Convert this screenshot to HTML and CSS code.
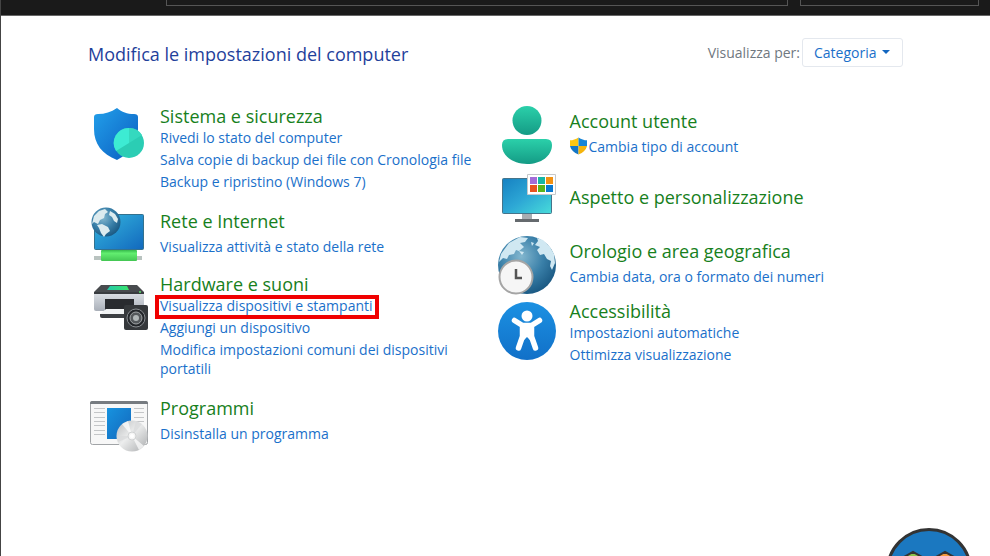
FILE: index.html
```html
<!DOCTYPE html>
<html lang="it">
<head>
    <meta charset="utf-8">
    <title>Pannello di controllo</title>
    <link rel="stylesheet" href="styles.css">
</head>
<body>
    <div class="topbar">
        <div class="address-box"></div>
        <div class="search-box"></div>
    </div>
    <main class="panel">
        <div class="panel-header">
            <h1>Modifica le impostazioni del computer</h1>
            <div class="view-by">
                <label for="view">Visualizza per:</label>
                <div class="select-wrap">
                    <select id="view">
                        <option>Categoria</option>
                    </select>
                </div>
            </div>
        </div>
        <div class="columns">
            <div class="column column-left">
                <section class="item">
                    <svg class="icon" viewBox="0 0 60 48" aria-hidden="true">
                        <defs>
                            <linearGradient id="shield" x1="0" y1="0" x2="1" y2="1"><stop offset="0" stop-color="#22a0ea"/><stop offset="1" stop-color="#0b5cc0"/></linearGradient>
                        </defs>
                        <path d="M29 4c5 4 10 6 17 6q4 0 4 3v12c0 14-8 24-21 31C14 50 6 40 6 25V13q0-3 4-3c7 0 13-2 19-6z" fill="url(#shield)"/>
                        <circle cx="41" cy="39" r="15" fill="#2bcdb4"/>
                        <path d="M41 39V24A15 15 0 0 0 28 47z" fill="#3debd3"/>
                        <path d="M41 39l13-8a15 15 0 0 0-13-7z" fill="#35d9bf"/>
                    </svg>
                    <div>
                        <h2><a href="#">Sistema e sicurezza</a></h2>
                        <ul>
                            <li><a href="#">Rivedi lo stato del computer</a></li>
                            <li><a href="#">Salva copie di backup dei file con Cronologia file</a></li>
                            <li><a href="#">Backup e ripristino (Windows 7)</a></li>
                        </ul>
                    </div>
                </section>
                <section class="item">
                    <svg class="icon" viewBox="0 0 60 48" aria-hidden="true">
                        <defs>
                            <linearGradient id="screen" x1="0" y1="0" x2="1" y2="1"><stop offset="0" stop-color="#35b8df"/><stop offset="1" stop-color="#1268bd"/></linearGradient>
                            <radialGradient id="globe" cx=".4" cy=".35" r=".7"><stop offset="0" stop-color="#83b7cf"/><stop offset=".55" stop-color="#397fa8"/><stop offset="1" stop-color="#185680"/></radialGradient>
                            <linearGradient id="cable" x1="0" y1="0" x2="0" y2="1"><stop offset="0" stop-color="#36ba4c"/><stop offset=".3" stop-color="#62ee70"/><stop offset="1" stop-color="#43c653"/></linearGradient>
                        </defs>
                        <rect x="6.500" y="5.500" width="49" height="35" rx="1" fill="url(#screen)" stroke="#33718e"/>
                        <path d="M6 47h48v4H6z" fill="#b9c3c0"/>
                        <rect x="13" y="41" width="36" height="11" rx="1" fill="url(#cable)"/>
                        <circle cx="18" cy="13" r="14.500" fill="url(#globe)"/>
                        <path d="M6 7l5-5 6-2 3 3-3 2-1 4-4 2-2 4-4-2-2 2zM9 16l5-1 6 3 2 4-4 3-2 3-3-4-2-5zM22 2l5 3 3 5-1 4-3-2-2-4-3-2z" fill="#dcebef"/>
                    </svg>
                    <div>
                        <h2><a href="#">Rete e Internet</a></h2>
                        <ul class="single">
                            <li><a href="#">Visualizza attività e stato della rete</a></li>
                        </ul>
                    </div>
                </section>
                <section class="item">
                    <svg class="icon" viewBox="0 0 60 48" aria-hidden="true">
                        <defs>
                            <linearGradient id="body" x1="0" y1="0" x2="0" y2="1"><stop offset="0" stop-color="#dce0e5"/><stop offset="1" stop-color="#a9afb8"/></linearGradient>
                            <linearGradient id="light" x1="0" y1="0" x2="1" y2="0"><stop offset="0" stop-color="#25c8aa"/><stop offset="1" stop-color="#39e56c"/></linearGradient>
                        </defs>
                        <path d="M13 13h36l7 7v2H6v-2z" fill="#484b4e"/>
                        <path d="M22 14h17l2 4H19z" fill="url(#light)"/>
                        <path d="M6 21h50v16q0 2-2 2H8q-2 0-2-2z" fill="url(#body)"/>
                        <path d="M6 20h50v2H6z" fill="#393c40"/>
                        <circle cx="52" cy="20" r="1" fill="#58e06b"/>
                        <path d="M17 27h29v13H17z" fill="#292b2f"/>
                        <path d="M18 37h25v5H12z" fill="#f1f3f4"/>
                        <path d="M12 42h27v4H14q-2 0-2-2z" fill="#3c3f43"/>
                        <rect x="36" y="33" width="24" height="25" rx="2" fill="#35383b"/>
                        <circle cx="48" cy="46" r="9" fill="#222529" stroke="#888c90"/>
                        <circle cx="48" cy="46" r="6" fill="#54585b" stroke="#a0a4a6"/>
                        <circle cx="48" cy="46" r="3" fill="#b0b6b7"/>
                    </svg>
                    <div>
                        <h2><a href="#">Hardware e suoni</a></h2>
                        <ul>
                            <li><a class="highlight" href="#">Visualizza dispositivi e stampanti</a></li>
                            <li><a href="#">Aggiungi un dispositivo</a></li>
                            <li><a href="#">Modifica impostazioni comuni dei dispositivi portatili</a></li>
                        </ul>
                    </div>
                </section>
                <section class="item">
                    <svg class="icon" viewBox="0 0 60 48" aria-hidden="true">
                        <defs>
                            <linearGradient id="app" x1="0" y1="0" x2="1" y2="1"><stop offset="0" stop-color="#1793df"/><stop offset="1" stop-color="#1367bc"/></linearGradient>
                            <linearGradient id="disc" x1="0" y1="0" x2="1" y2="1"><stop offset="0" stop-color="#b9bbbd"/><stop offset=".45" stop-color="#eceded"/><stop offset="1" stop-color="#a9abad"/></linearGradient>
                        </defs>
                        <rect x="2.500" y="5.500" width="57" height="43" rx="2" fill="#f7f7f7" stroke="#a1a4a7"/>
                        <path d="M2 7q0-2 2-2h54q2 0 2 2v1H2z" fill="#767b80"/>
                        <path d="M6 12.500h11M6 16.500h11M6 21.500h11M6 25.500h11M6 29.500h11M6 34.500h11M6 38.500h11M46 12.500h10M46 16.500h10M46 21.500h10M46 25.500h10" stroke="#c4c6c8"/>
                        <path d="M19 12h24v31H19z" fill="url(#app)"/>
                        <circle cx="44" cy="40" r="15.500" fill="url(#disc)"/>
                        <path d="M44 40L34 28l6-3zM44 40l12 10-5 4z" fill="#fff" opacity=".7"/>
                        <path d="M44 40l4-15 6 3zM44 40L30 46l-1-6z" fill="#d9dbdc" opacity=".8"/>
                        <circle cx="44" cy="40" r="4" fill="#f5f5f5" stroke="#d0d2d3"/>
                        <circle cx="44" cy="40" r="2" fill="#fff"/>
                    </svg>
                    <div>
                        <h2><a href="#">Programmi</a></h2>
                        <ul class="single">
                            <li><a href="#">Disinstalla un programma</a></li>
                        </ul>
                    </div>
                </section>
            </div>
            <div class="column column-right">
                <section class="item">
                    <svg class="icon" viewBox="0 0 60 48" aria-hidden="true">
                        <defs>
                            <linearGradient id="user" x1="0" y1="0" x2="0" y2="1"><stop offset="0" stop-color="#2bd0aa"/><stop offset="1" stop-color="#149b85"/></linearGradient>
                        </defs>
                        <circle cx="29" cy="12.500" r="14.500" fill="url(#user)"/>
                        <path d="M10 31h38q6 0 6 6c0 11-11 19-25 19S4 48 4 37q0-6 6-6z" fill="url(#user)"/>
                    </svg>
                    <div>
                        <h2><a href="#">Account utente</a></h2>
                        <ul class="single">
                            <li class="with-shield">
                                <svg class="uac" viewBox="0 0 18 18" aria-hidden="true">
                                    <path d="M9 0C6 2 3 3 0 3v6h9z" fill="#fcc611"/>
                                    <path d="M9 0c3 2 6 3 9 3v6H9z" fill="#1685d8"/>
                                    <path d="M0 9h9v9C4 16 1 13 0 9z" fill="#1376c6"/>
                                    <path d="M18 9H9v9c5-2 8-5 9-9z" fill="#f5b40c"/>
                                </svg>
                                <a href="#">Cambia tipo di account</a>
                            </li>
                        </ul>
                    </div>
                </section>
                <section class="item">
                    <svg class="icon" viewBox="0 0 60 48" aria-hidden="true">
                        <defs>
                            <linearGradient id="desk" x1="0" y1="0" x2="1" y2="1"><stop offset="0" stop-color="#1681c2"/><stop offset=".5" stop-color="#2da7d5"/><stop offset="1" stop-color="#48dcda"/></linearGradient>
                        </defs>
                        <path d="M24 40h10v7H24z" fill="#a8adb1"/>
                        <path d="M17 46h24v3H17z" fill="#656a6e"/>
                        <rect x="4.500" y="5.500" width="49" height="35" rx="1" fill="url(#desk)" stroke="#45748a"/>
                        <path d="M29.500 1.500h28v20h-28z" fill="#fff" stroke="#c5c8ca"/>
                        <path d="M32 4h7v7h-7z" fill="#a36cd8"/>
                        <path d="M40 4h7v7h-7z" fill="#18b6a5"/>
                        <path d="M48 4h7v7h-7z" fill="#f29112"/>
                        <path d="M32 12h7v7h-7z" fill="#e8531f"/>
                        <path d="M40 12h7v7h-7z" fill="#5ab51b"/>
                        <path d="M48 12h7v7h-7z" fill="#0879d1"/>
                    </svg>
                    <div>
                        <h2><a href="#">Aspetto e personalizzazione</a></h2>
                    </div>
                </section>
                <section class="item">
                    <svg class="icon" viewBox="0 0 60 48" aria-hidden="true">
                        <circle cx="29" cy="27" r="29" fill="url(#globe)"/>
                        <path d="M3 16L11 5l11-6 8 1-3 4-5 1 4 4-5 4-3-1-2 4-5 1-2 4-4-1-4 4zM39 0l6 2 7 7 4 7 1 9-3 7-2-4 1-5-4-2-3-5-4 1-3-5 3-3-5-2 3-4zM21 13l5 1-2 3zM33 4l3 1-2 3z" fill="#d0e8f2"/>
                        <circle cx="18" cy="39" r="16.500" fill="#f6f6f6" stroke="#a5a5a5" stroke-width="2"/>
                        <path d="M18 31v9h6" fill="none" stroke="#555" stroke-width="2.500"/>
                    </svg>
                    <div>
                        <h2><a href="#">Orologio e area geografica</a></h2>
                        <ul class="single">
                            <li><a href="#">Cambia data, ora o formato dei numeri</a></li>
                        </ul>
                    </div>
                </section>
                <section class="item">
                    <svg class="icon" viewBox="0 0 60 48" aria-hidden="true">
                        <defs>
                            <linearGradient id="access" x1="0" y1="0" x2="0" y2="1"><stop offset="0" stop-color="#1c91e2"/><stop offset="1" stop-color="#1170c8"/></linearGradient>
                        </defs>
                        <circle cx="29" cy="22" r="29" fill="url(#access)"/>
                        <circle cx="29" cy="7" r="5.500" fill="#fff"/>
                        <path d="M16.500 11.500l8 5h9l8-5M24.500 18.500v9l-4 11.500M33.500 18.500v9l4 11.500" fill="none" stroke="#fff" stroke-width="5.500" stroke-linecap="round" stroke-linejoin="round"/>
                        <path d="M24 16h10v15h-2l-3-3-3 3h-2z" fill="#fff"/>
                    </svg>
                    <div>
                        <h2><a href="#">Accessibilità</a></h2>
                        <ul>
                            <li><a href="#">Impostazioni automatiche</a></li>
                            <li><a href="#">Ottimizza visualizzazione</a></li>
                        </ul>
                    </div>
                </section>
            </div>
        </div>
    </main>
    <svg class="mascot" viewBox="0 0 86 28" aria-hidden="true">
        <circle cx="43" cy="43" r="41.500" fill="#1b78c0" stroke="#333" stroke-width="3"/>
        <path d="M18 29l9-5 9 5v10H18z" fill="#8bc34a" stroke="#333" stroke-width="2"/>
        <path d="M50 29l9-5 9 5v10H50z" fill="#f59a3c" stroke="#333" stroke-width="2"/>
    </svg>
</body>
</html>
```
FILE: styles.css
```css
* {
    box-sizing: border-box;
}
body {
    margin: 0;
    min-height: 100vh;
    background-color: #fff;
    border-left: 1px solid #444;
    font-family: "Open Sans", "Noto Sans", sans-serif;
    font-size: 14px;
    line-height: 19px;
}
a {
    color: #1a70ca;
    text-decoration: none;
}
a:hover {
    text-decoration: underline;
}
.topbar {
    display: flex;
    gap: 12px;
    height: 16px;
    padding: 0 11px 0 165px;
    background-color: #1a1a1a;
    border-bottom: 1px solid #666;
}
.address-box,
.search-box {
    height: 6px;
    border: 1px solid #555;
    border-top: none;
}
.address-box {
    flex: 7;
}
.search-box {
    flex: 2;
}
.panel {
    padding: 22px 87px 0;
}
.panel-header {
    display: flex;
    justify-content: space-between;
    align-items: flex-start;
}
h1 {
    margin: 0;
    padding-top: 4px;
    color: #1f419b;
    font-size: 18px;
    font-weight: normal;
    line-height: 24px;
}
.view-by {
    display: flex;
    align-items: center;
    gap: 2px;
    color: #707880;
}
.select-wrap {
    position: relative;
}
.select-wrap::after {
    content: "";
    position: absolute;
    top: 12px;
    right: 13px;
    border: 4px solid transparent;
    border-top-color: #1266c0;
    pointer-events: none;
}
select {
    appearance: none;
    width: 101px;
    height: 29px;
    padding: 0 11px;
    background-color: #fff;
    border: 1px solid #e4e8ee;
    border-radius: 3px;
    color: #1a70ca;
    font: inherit;
}
.columns {
    display: grid;
    grid-template-columns: 1fr 1fr;
    column-gap: 4px;
    padding-top: 37px;
}
.column {
    display: flex;
    flex-direction: column;
}
.column-left {
    gap: 15px;
}
.column-right {
    gap: 9px;
}
.item {
    display: flex;
    gap: 12px;
}
.column-left .item {
    padding-right: 14px;
}
.column-right .item {
    align-items: center;
    min-height: 56px;
}
.icon {
    flex: none;
    width: 60px;
    height: 48px;
    overflow: visible;
}
h2 {
    margin: 0;
    font-size: 18px;
    font-weight: normal;
    line-height: 24px;
}
h2 a {
    color: #17801c;
}
ul {
    list-style: none;
    margin: 0;
    padding: 0;
}
li {
    margin-bottom: 3px;
}
.single {
    padding-top: 4px;
}
.single li {
    margin-bottom: 0;
}
.with-shield {
    display: flex;
    align-items: center;
    gap: 2px;
}
.uac {
    width: 17px;
    height: 18px;
}
.highlight {
    position: relative;
}
.highlight::after {
    content: "";
    position: absolute;
    inset: -1px -6px -4px -5px;
    border: 4px solid #f00000;
}
.mascot {
    position: fixed;
    right: 18px;
    bottom: 0;
    width: 86px;
    height: 28px;
}
```
